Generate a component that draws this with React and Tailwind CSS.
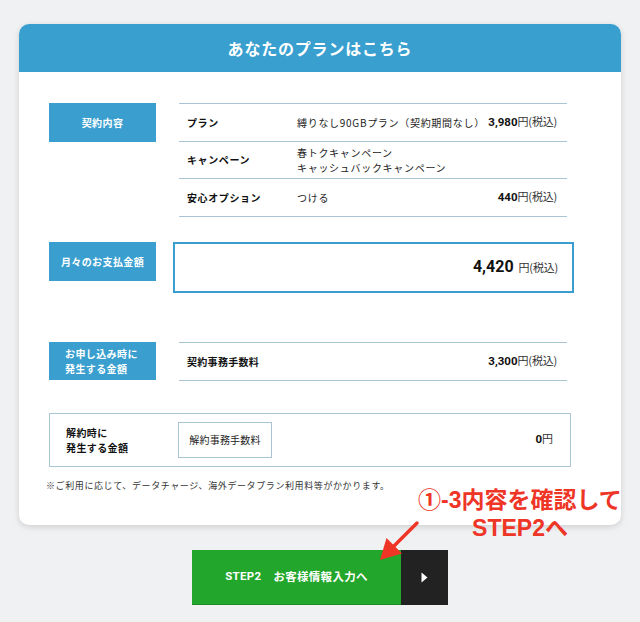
const jp = "font-['Noto_Sans_CJK_JP',sans-serif]"

function Price({ value, big }) {
  return (
    <span className="flex items-baseline whitespace-nowrap">
      <span
        className={`font-['Roboto','Noto_Sans_CJK_JP',sans-serif] font-bold text-[#111] ${
          big ? 'text-[16px] mr-[5px]' : 'text-[11.5px]'
        }`}
      >
        {value}
      </span>
      <span className="text-[11px] text-[#333] tracking-[-0.2px]">円(税込)</span>
    </span>
  )
}

function Label({ children, className = '' }) {
  return (
    <div
      className={`w-[107px] shrink-0 bg-[#3a9fcf] text-white font-bold text-[10px] tracking-[0.4px] flex items-center ${className}`}
    >
      {children}
    </div>
  )
}

function Row({ name, desc, price }) {
  return (
    <div className="h-[37.5px] border-b border-[#a7c5d4] flex items-center pl-[8px] pr-[10px]">
      <div className="w-[110px] shrink-0 font-bold text-[10px] tracking-[0.6px] text-[#111]">
        {name}
      </div>
      <div className="flex-1 text-[10px] tracking-[0.7px] leading-[15px] text-[#222]">{desc}</div>
      {price && <Price value={price} />}
    </div>
  )
}

export default function App() {
  return (
    <div className={`relative min-h-screen bg-[#f0f1f3] pt-[24px] pb-[18px] ${jp}`}>
      <div className="mx-[19px] w-[602px] rounded-[10px] bg-white shadow-[0_2px_6px_rgba(0,0,0,0.14)] overflow-hidden">
        <div className="h-[48px] bg-[#389fcf] flex items-center justify-center text-white font-bold text-[16px] tracking-[0.8px]">
          あなたのプランはこちら
        </div>

        <div className="pl-[30px] pr-[54px] pt-[31px] pb-[33px]">
          {/* 契約内容 */}
          <div className="flex gap-[23px]">
            <Label className="h-[39px] justify-center">契約内容</Label>
            <div className="flex-1 border-t border-[#a7c5d4]">
              <Row name="プラン" desc="縛りなし90GBプラン（契約期間なし）" price="3,980" />
              <Row
                name="キャンペーン"
                desc={
                  <>
                    春トクキャンペーン
                    <br />
                    キャッシュバックキャンペーン
                  </>
                }
              />
              <Row name="安心オプション" desc="つける" price="440" />
            </div>
          </div>

          {/* 月々のお支払金額 */}
          <div className="flex gap-[17px] mt-[25px] -mr-[7px]">
            <Label className="h-[39px] justify-center">月々のお支払金額</Label>
            <div className="flex-1 h-[51px] border-2 border-[#3a9fcf] flex items-center justify-end pr-[14px]">
              <Price value="4,420" big />
            </div>
          </div>

          {/* お申し込み時に発生する金額 */}
          <div className="flex gap-[23px] mt-[49px]">
            <Label className="h-[38px] pl-[16px] leading-[15px]">
              お申し込み時に
              <br />
              発生する金額
            </Label>
            <div className="flex-1 h-[39px] border-y border-[#a7c5d4] flex items-center pl-[8px] pr-[10px]">
              <div className="flex-1 font-bold text-[10px] tracking-[0.3px] text-[#111]">契約事務手数料</div>
              <Price value="3,300" />
            </div>
          </div>

          {/* 解約時に発生する金額 */}
          <div className="mt-[32px] -mr-[4px] h-[54px] border border-[#a7c5d4] flex items-center">
            <div className="w-[128px] shrink-0 pl-[16px] font-bold text-[10px] leading-[15px] tracking-[0.4px] text-[#111]">
              解約時に
              <br />
              発生する金額
            </div>
            <div className="w-[94px] h-[36px] border border-[#a7c5d4] flex items-center justify-center text-[10px] tracking-[0.2px] text-[#222]">
              解約事務手数料
            </div>
            <div className="flex-1 flex justify-end items-baseline pr-[17px]">
              <span className="font-['Roboto',sans-serif] font-bold text-[11.5px] text-[#111]">0</span>
              <span className="text-[11px] text-[#333]">円</span>
            </div>
          </div>

          <p className="mt-[13px] -ml-[3px] text-[9px] tracking-[0.6px] text-[#333] leading-[12px]">
            ※ご利用に応じて、データチャージ、海外データプラン利用料等がかかります。
          </p>
        </div>
      </div>

      {/* STEP2 button */}
      <div className="mt-[25px] flex justify-center">
        <button className="flex h-[55px] w-[256px]">
          <span className="w-[209px] h-full bg-[#22a62b] border-b border-[#1b8a22] flex items-center justify-center text-white font-bold text-[11.5px] tracking-[0.3px]">
            <span className="font-['Roboto',sans-serif]">STEP2</span>
            <span className="ml-[12px]">お客様情報入力へ</span>
          </span>
          <span className="flex-1 h-full bg-[#222] flex items-center justify-center">
            <svg width="7" height="11" viewBox="0 0 7 11">
              <path d="M0.5 0.5 L6.5 5.5 L0.5 10.5 Z" fill="#fff" />
            </svg>
          </span>
        </button>
      </div>

      {/* annotation overlay */}
      <div className="absolute left-[414px] top-[486px] w-[212px] text-center text-[#ee3526] font-bold text-[23px] leading-[28px] font-['Liberation_Sans','Noto_Sans_CJK_JP',sans-serif]">
        ①-3内容を確認して
        <br />
        STEP2へ
      </div>
      <svg className="absolute left-[370px] top-[515px]" width="55" height="50" viewBox="0 0 55 50">
        <line x1="47" y1="8" x2="24" y2="31" stroke="#ee3526" strokeWidth="3.5" strokeLinecap="round" />
        <polygon points="10,45 32,38.5 16.5,23" fill="#ee3526" />
      </svg>
    </div>
  )
}
